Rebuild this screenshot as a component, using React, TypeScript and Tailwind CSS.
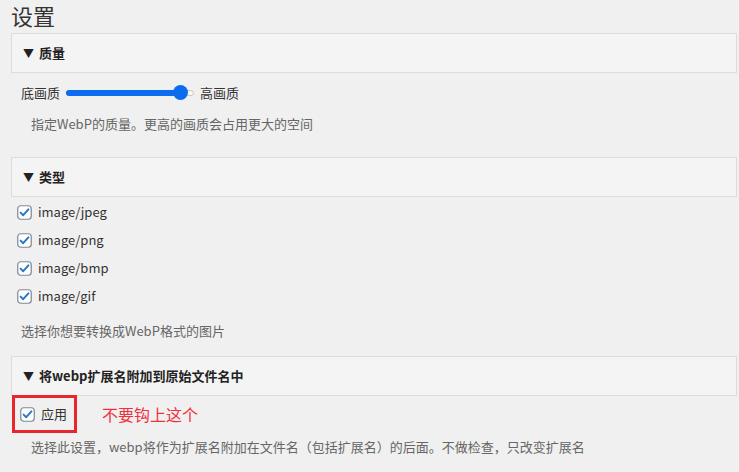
import React from "react";

const font = { fontFamily: '"Noto Sans CJK SC", "Noto Sans", sans-serif' };

const Check = () => (
  <svg width="15" height="15" viewBox="0 0 15 15" className="shrink-0">
    <rect x="0.75" y="0.75" width="13.5" height="13.5" rx="3" fill="#fff" stroke="#7d8893" strokeWidth="1.2" />
    <path d="M3.6 7.6 L6.2 10.2 L11.4 4.4" fill="none" stroke="#2d78c8" strokeWidth="2" strokeLinecap="round" strokeLinejoin="round" />
  </svg>
);

const Bar = ({ title }: { title: string }) => (
  <div className="h-[40px] flex items-center pl-[11px] mr-[2px] bg-[#f4f4f4] border border-[#dcdcdc] text-[13px] font-bold text-[#222]">
    <span className="text-[11px] mr-[5px]">▼</span>
    {title}
  </div>
);

const Slider = () => (
  <div className="relative w-[128px] h-[16px] flex items-center">
    <div className="w-full h-[6px] rounded-full bg-[#f7f7f7] border border-[#c9c9c9]" />
    <div className="absolute left-0 top-[5px] w-[118px] h-[6px] rounded-full bg-[#0b6cf0]" />
    <div className="absolute left-[107px] top-[0px] w-[15px] h-[15px] rounded-full bg-[#0b6cf0]" />
  </div>
);

const Item = ({ label }: { label: string }) => (
  <div className="h-[28px] flex items-center gap-[6px] pl-[17px]">
    <Check />
    <span className="text-[13px] text-[#333]">{label}</span>
  </div>
);

export default function App() {
  return (
    <div className="w-[739px] h-[472px] overflow-hidden bg-[#f0f0f0] pl-[11px]" style={font}>
      <h1 className="text-[22px] leading-[28px] pt-[1px] text-[#333] mb-[4px]">设置</h1>

      <Bar title="质量" />
      <div className="flex items-center gap-[6px] pl-[10px] h-[40px] text-[13px] text-[#333]">
        <span>底画质</span>
        <Slider />
        <span>高画质</span>
      </div>
      <p className="pl-[20px] text-[13px] text-[#666] leading-[22px]">指定WebP的质量。更高的画质会占用更大的空间</p>

      <div className="h-[22px]" />
      <Bar title="类型" />
      <div className="-ml-[11px] mt-[1px]">
        <Item label="image/jpeg" />
        <Item label="image/png" />
        <Item label="image/bmp" />
        <Item label="image/gif" />
      </div>
      <p className="pl-[10px] pt-[10px] text-[13px] text-[#666] leading-[22px]">选择你想要转换成WebP格式的图片</p>

      <div className="h-[14px]" />
      <Bar title="将webp扩展名附加到原始文件名中" />
      <div className="flex items-center h-[38px] mt-[-1px]">
        <div className="relative flex items-center gap-[6px] h-[38px] w-[65px] pl-[5px] border-[3px] border-[#e8262e] ml-[1px]">
          <Check />
          <span className="text-[13px] text-[#333]">应用</span>
        </div>
        <span className="ml-[25px] text-[16px] text-[#f0303f]">不要钩上这个</span>
      </div>
      <p className="pl-[20px] pt-[3px] text-[13px] text-[#666] leading-[22px]">
        选择此设置，webp将作为扩展名附加在文件名（包括扩展名）的后面。不做检查，只改变扩展名
      </p>
    </div>
  );
}
